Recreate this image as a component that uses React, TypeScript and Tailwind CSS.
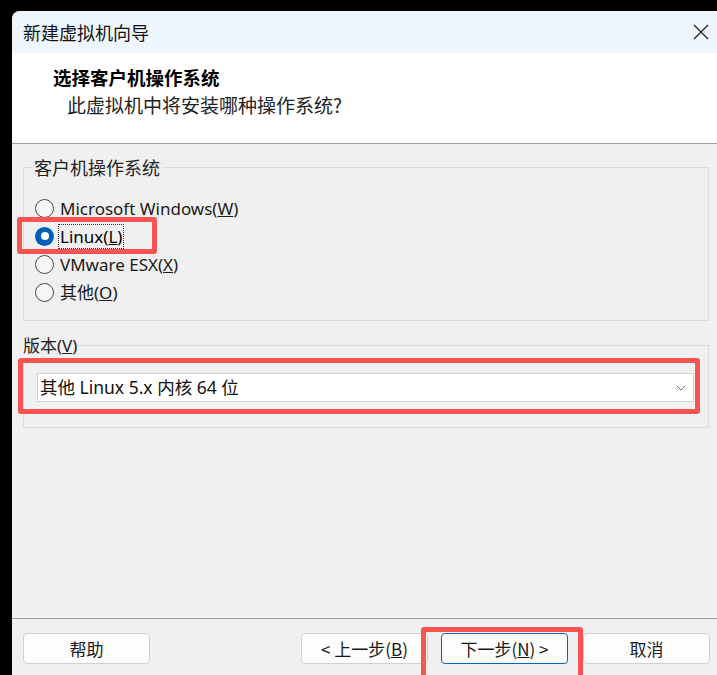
import { ChevronDown } from "lucide-react";

const ui = { fontFamily: '"Segoe UI", "Noto Sans", "Noto Sans CJK SC", sans-serif' };
const cjk = { fontFamily: '"Noto Sans CJK SC", sans-serif' };

const Radio = ({ checked, children }: { checked?: boolean; children: React.ReactNode }) => (
  <div className="flex items-center h-[28px]">
    <span
      className={
        checked
          ? "w-[19px] h-[19px] rounded-full bg-[#005FB8] flex items-center justify-center"
          : "w-[19px] h-[19px] rounded-full border border-[#4a4a4a] bg-[#f7f7f7]"
      }
    >
      {checked && <span className="w-[8px] h-[8px] rounded-full bg-white" />}
    </span>
    <span
      className={
        checked
          ? "ml-[5px] px-[1px] leading-[23px] outline-1 outline-dotted outline-[#333] text-[17px] text-black"
          : "ml-[6px] leading-[23px] text-[17px] text-[#1a1a1a]"
      }
    >
      {children}
    </span>
  </div>
);

const Btn = ({ children, primary }: { children: React.ReactNode; primary?: boolean }) => (
  <button
    className={
      "w-[127px] h-[31px] rounded-[4px] bg-[#fdfdfd] text-[17px] text-[#1a1a1a] " +
      (primary ? "border border-[#0067C0]" : "border border-[#d0d0d0]")
    }
  >
    {children}
  </button>
);

export default function App() {
  return (
    <div className="w-[717px] h-[675px] bg-black overflow-hidden pl-[12px] pt-[11px]" style={ui}>
      <div className="relative h-[700px] bg-[#f0f0f0] rounded-tl-[8px] overflow-hidden flex flex-col">
        {/* title bar */}
        <div className="h-[42px] bg-[#eef5fb] flex items-center justify-between pl-[11px] pr-[10px]">
          <span className="text-[18px] text-[#111]" style={cjk}>新建虚拟机向导</span>
          <svg width="16" height="16" viewBox="0 0 16 16" className="mr-[-2px]">
            <path d="M1 1 L15 15 M15 1 L1 15" stroke="#222" strokeWidth="1.3" />
          </svg>
        </div>

        {/* header */}
        <div className="h-[91px] bg-white border-b border-[#a0a0a0] pl-[41px] pt-[11px]" style={cjk}>
          <div className="text-[18.5px] font-bold text-black leading-[27px]">选择客户机操作系统</div>
          <div className="pl-[14px] text-[19px] text-[#222] leading-[27px]">此虚拟机中将安装哪种操作系统?</div>
        </div>

        {/* body */}
        <div className="flex-1 flex flex-col px-[11px] pr-[8px]">
          <fieldset className="mt-[11px] h-[166px] border border-[#dcdcdc] pl-[11px] pr-2 pb-2">
            <legend className="ml-[-3px] px-[2px] text-[18px] text-[#222] leading-[24px]" style={cjk}>客户机操作系统</legend>
            <div className="pt-[15px]">
              <Radio>Microsoft Windows(<u>W</u>)</Radio>
              <Radio checked>Linux(<u>L</u>)</Radio>
              <Radio>VMware ESX(<u>X</u>)</Radio>
              <Radio><span style={cjk}>其他</span>(<u>O</u>)</Radio>
            </div>
          </fieldset>

          <fieldset className="mt-[12px] h-[95px] border border-[#dcdcdc] pl-[13px] pr-[14px]">
            <legend className="ml-[-14px] px-0 text-[17px] text-[#222] leading-[24px]">
              <span style={cjk}>版本</span>(<u>V</u>)
            </legend>
            <div className="mt-[15px] h-[29px] bg-white border border-[#d4d4d4] flex items-center justify-between pl-[2px] pr-[4px]">
              <span className="text-[17.5px] text-[#111]">
                <span style={cjk}>其他</span> Linux 5.x <span style={cjk}>内核</span> 64 <span style={cjk}>位</span>
              </span>
              <ChevronDown size={16} strokeWidth={1.3} color="#555" />
            </div>
          </fieldset>
        </div>

        {/* footer */}
        <div className="h-[93px] border-t border-[#a0a0a0] flex items-start pt-[14px] pl-[11px]" style={cjk}>
          <Btn>帮助</Btn>
          <div className="ml-[151px] flex gap-[13px]">
            <Btn>&lt; 上一步(<u>B</u>)</Btn>
            <Btn primary>下一步(<u>N</u>) &gt;</Btn>
          </div>
          <div className="ml-[15px]">
            <Btn>取消</Btn>
          </div>
        </div>

        {/* annotation highlights */}
        <div className="absolute left-[5px] top-[206px] w-[140px] h-[37px] border-[5px] border-[#f85552] rounded-[3px]" />
        <div className="absolute left-[6px] top-[347px] w-[682px] h-[56px] border-[5px] border-[#f85552] rounded-[3px]" />
        <div className="absolute left-[409px] top-[616px] w-[162px] h-[60px] border-[5px] border-[#f85552] rounded-[3px]" />
      </div>
    </div>
  );
}
